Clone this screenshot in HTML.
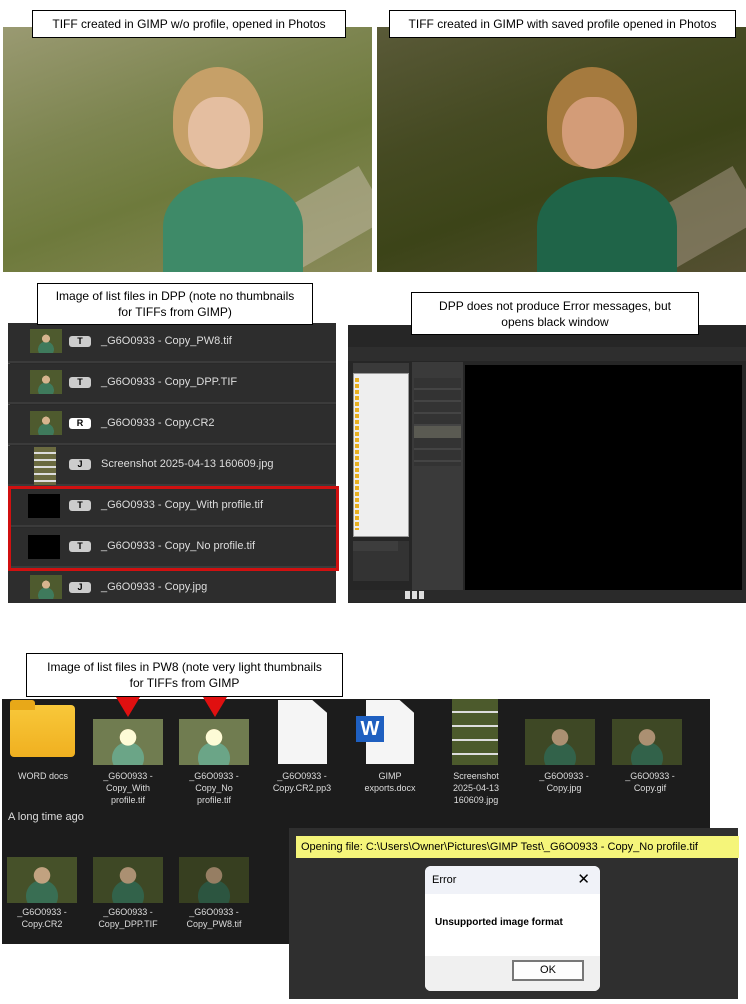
<!DOCTYPE html>
<html><head><meta charset="utf-8"><style>
*{margin:0;padding:0;box-sizing:border-box}
body{width:746px;height:1004px;background:#fff;position:relative;overflow:hidden;font-family:"Liberation Sans",sans-serif}
.a{position:absolute}
.lbl{position:absolute;background:#fff;border:1px solid #000;font-size:12px;color:#000;text-align:center;line-height:16px;display:flex;align-items:center;justify-content:center;z-index:5}
.photo{position:absolute;overflow:hidden}
.photo .hair{position:absolute;border-radius:50% 50% 40% 40%}
.photo .face{position:absolute;border-radius:45% 45% 50% 50%}
.photo .shirt{position:absolute;border-radius:45% 45% 10% 10%}
.row{position:absolute;left:8px;width:328px;height:40px;background:#2d2d2d;border-bottom:2px solid #3b3b3b;color:#ddd;font-size:11px}
.row .th{position:absolute;left:22px;top:6px;width:32px;height:24px}
.row .tg{position:absolute;left:61px;top:13px;width:22px;height:11px;background:#ccc;border-radius:3px;color:#000;font-size:9px;font-weight:bold;text-align:center;line-height:11px}
.row .nm{position:absolute;left:93px;top:12px}
.mini{background:radial-gradient(circle at 50% 40%,#d6b48e 0 18%,transparent 19%),radial-gradient(circle at 50% 85%,#3f7a5c 0 30%,transparent 31%),#4e5a2e}
.ic{position:absolute;font-size:9px;color:#ddd;text-align:center;line-height:12px;width:80px}
.th2{position:absolute;width:70px;height:46px}
</style></head><body>

<!-- top photos -->
<div class="photo" style="left:3px;top:27px;width:369px;height:245px;background:linear-gradient(160deg,#9a9a72 0%,#7d8550 35%,#6e7a3c 60%,#8a8a5a 100%)">
 <div class="a" style="left:240px;top:170px;width:140px;height:60px;background:#b9b29a;transform:rotate(-30deg);opacity:.6"></div>
 <div class="shirt" style="left:160px;top:150px;width:140px;height:110px;background:#3e8a68"></div>
 <div class="hair" style="left:170px;top:40px;width:90px;height:100px;background:#c6a068"></div>
 <div class="face" style="left:185px;top:70px;width:62px;height:72px;background:#e4bea0"></div>
</div>
<div class="photo" style="left:377px;top:27px;width:369px;height:245px;background:linear-gradient(160deg,#5a5a38 0%,#454a22 35%,#3c4418 60%,#555032 100%)">
 <div class="a" style="left:240px;top:170px;width:140px;height:60px;background:#9a8e78;transform:rotate(-30deg);opacity:.6"></div>
 <div class="shirt" style="left:160px;top:150px;width:140px;height:110px;background:#1f6448"></div>
 <div class="hair" style="left:170px;top:40px;width:90px;height:100px;background:#a57a3e"></div>
 <div class="face" style="left:185px;top:70px;width:62px;height:72px;background:#d39c78"></div>
</div>
<div class="lbl" style="left:32px;top:10px;width:314px;height:28px">TIFF created in GIMP w/o profile, opened in Photos</div>
<div class="lbl" style="left:389px;top:10px;width:347px;height:28px">TIFF created in GIMP with saved profile opened in Photos</div>

<!-- DPP list -->
<div class="a" style="left:8px;top:323px;width:328px;height:280px;background:#2a2a2a;border-left:2px solid #555"></div>
<div class="row" style="top:323px"><div class="th mini"></div><div class="tg">T</div><div class="nm">_G6O0933 - Copy_PW8.tif</div></div>
<div class="row" style="top:364px"><div class="th mini"></div><div class="tg">T</div><div class="nm">_G6O0933 - Copy_DPP.TIF</div></div>
<div class="row" style="top:405px"><div class="th mini"></div><div class="tg" style="background:#fff">R</div><div class="nm">_G6O0933 - Copy.CR2</div></div>
<div class="row" style="top:446px"><div class="th" style="left:26px;top:1px;width:22px;height:38px;background:repeating-linear-gradient(#6a6a40 0 5px,#ddd 5px 7px)"></div><div class="tg">J</div><div class="nm">Screenshot 2025-04-13 160609.jpg</div></div>
<div class="row" style="top:487px"><div class="th" style="left:20px;top:7px;background:#000"></div><div class="tg">T</div><div class="nm">_G6O0933 - Copy_With profile.tif</div></div>
<div class="row" style="top:528px"><div class="th" style="left:20px;top:7px;background:#000"></div><div class="tg">T</div><div class="nm">_G6O0933 - Copy_No profile.tif</div></div>
<div class="row" style="top:569px;height:34px;border:0"><div class="th mini"></div><div class="tg">J</div><div class="nm">_G6O0933 - Copy.jpg</div></div>
<div class="a" style="left:8px;top:486px;width:331px;height:85px;border:3px solid #d01010;z-index:4"></div>
<div class="lbl" style="left:37px;top:283px;width:276px;height:42px">Image of list files in DPP (note no thumbnails<br>for TIFFs from GIMP)</div>

<!-- DPP window -->
<div class="a" style="left:348px;top:325px;width:398px;height:278px;background:#262626"></div>
<div class="a" style="left:348px;top:347px;width:398px;height:14px;background:#2e2e2e"></div>
<div class="a" style="left:353px;top:363px;width:56px;height:10px;background:#3a3a3a"></div>
<div class="a" style="left:353px;top:373px;width:56px;height:164px;background:#eeeeee;border:1px solid #999"></div>
<div class="a" style="left:355px;top:378px;width:4px;height:152px;background:repeating-linear-gradient(#e8b020 0 4px,transparent 4px 6px)"></div>
<div class="a" style="left:353px;top:541px;width:56px;height:40px;background:#333"></div>
<div class="a" style="left:353px;top:541px;width:45px;height:10px;background:#3d3d3d"></div>
<div class="a" style="left:412px;top:362px;width:51px;height:228px;background:#3a3a3a"></div>
<div class="a" style="left:414px;top:378px;width:47px;height:88px;background:repeating-linear-gradient(#333 0 10px,#444 10px 12px)"></div>
<div class="a" style="left:414px;top:426px;width:47px;height:12px;background:#5a5a52"></div>
<div class="a" style="left:465px;top:365px;width:277px;height:225px;background:#000"></div>
<div class="a" style="left:348px;top:590px;width:398px;height:12px;background:#2a2a2a"></div>
<div class="a" style="left:405px;top:591px;width:20px;height:8px;background:repeating-linear-gradient(90deg,#ddd 0 5px,#2a2a2a 5px 7px)"></div>
<div class="lbl" style="left:411px;top:292px;width:288px;height:43px">DPP does not produce Error messages, but<br>opens black window</div>

<!-- PW8 -->
<div class="a" style="left:2px;top:699px;width:708px;height:245px;background:#1c1c1c"></div>
<div class="a" style="left:10px;top:705px;width:65px;height:52px;background:linear-gradient(#f8c83a,#f0b020);border-radius:4px"></div>
<div class="a" style="left:10px;top:700px;width:25px;height:10px;background:#e8a818;border-radius:3px 3px 0 0"></div>
<div class="th2 mini" style="left:93px;top:719px;filter:brightness(1.4) saturate(.7)"></div>
<div class="th2 mini" style="left:179px;top:719px;filter:brightness(1.4) saturate(.7)"></div>
<div class="a" style="left:116px;top:697px;width:0;height:0;border-left:12px solid transparent;border-right:12px solid transparent;border-top:20px solid #e01010"></div>
<div class="a" style="left:203px;top:697px;width:0;height:0;border-left:12px solid transparent;border-right:12px solid transparent;border-top:20px solid #e01010"></div>
<div class="a" style="left:278px;top:700px;width:49px;height:64px;background:#f5f5f5;clip-path:polygon(0 0,70% 0,100% 20%,100% 100%,0 100%)"></div>
<div class="a" style="left:366px;top:700px;width:48px;height:64px;background:#f5f5f5;clip-path:polygon(0 0,70% 0,100% 20%,100% 100%,0 100%)"></div>
<div class="a" style="left:356px;top:716px;width:28px;height:26px;background:#1e5fc0;color:#fff;font-weight:bold;font-size:20px;text-align:center;line-height:26px">W</div>
<div class="a" style="left:452px;top:699px;width:46px;height:66px;background:repeating-linear-gradient(#4c5a2c 0 12px,#ddd 12px 14px)"></div>
<div class="th2 mini" style="left:525px;top:719px;filter:brightness(.8)"></div>
<div class="th2 mini" style="left:612px;top:719px;filter:brightness(.8)"></div>
<div class="ic" style="left:3px;top:770px">WORD docs</div>
<div class="ic" style="left:88px;top:770px">_G6O0933 -<br>Copy_With<br>profile.tif</div>
<div class="ic" style="left:174px;top:770px">_G6O0933 -<br>Copy_No<br>profile.tif</div>
<div class="ic" style="left:262px;top:770px">_G6O0933 -<br>Copy.CR2.pp3</div>
<div class="ic" style="left:350px;top:770px">GIMP<br>exports.docx</div>
<div class="ic" style="left:436px;top:770px">Screenshot<br>2025-04-13<br>160609.jpg</div>
<div class="ic" style="left:524px;top:770px">_G6O0933 -<br>Copy.jpg</div>
<div class="ic" style="left:610px;top:770px">_G6O0933 -<br>Copy.gif</div>
<div class="a" style="left:8px;top:811px;font-size:11px;color:#ddd">A long time ago</div>
<div class="th2 mini" style="left:7px;top:857px;filter:brightness(.9)"></div>
<div class="th2 mini" style="left:93px;top:857px;filter:brightness(.8)"></div>
<div class="th2 mini" style="left:179px;top:857px;filter:brightness(.7)"></div>
<div class="ic" style="left:2px;top:906px">_G6O0933 -<br>Copy.CR2</div>
<div class="ic" style="left:88px;top:906px">_G6O0933 -<br>Copy_DPP.TIF</div>
<div class="ic" style="left:174px;top:906px">_G6O0933 -<br>Copy_PW8.tif</div>
<div class="lbl" style="left:26px;top:653px;width:317px;height:44px">Image of list files in PW8 (note very light thumbnails<br>for TIFFs from GIMP</div>

<!-- error dialog -->
<div class="a" style="left:289px;top:828px;width:449px;height:171px;background:#2f2f2f"></div>
<div class="a" style="left:296px;top:836px;width:443px;height:22px;background:#f5f57a;font-size:11px;line-height:22px;padding-left:5px;color:#000">Opening file: C:\Users\Owner\Pictures\GIMP Test\_G6O0933 - Copy_No profile.tif</div>
<div class="a" style="left:425px;top:866px;width:175px;height:125px;background:#fff;border-radius:6px;overflow:hidden">
 <div class="a" style="left:0;top:0;width:175px;height:28px;background:#f0f2f8;font-size:11px;line-height:28px;padding-left:7px">Error<span style="position:absolute;right:10px;font-size:15px">✕</span></div>
 <div class="a" style="left:10px;top:51px;font-size:10px;font-weight:bold">Unsupported image format</div>
 <div class="a" style="left:0;top:90px;width:175px;height:35px;background:#f0f0f0"></div>
 <div class="a" style="left:87px;top:94px;width:72px;height:21px;background:#fdfdfd;border:2px solid #777;font-size:11px;text-align:center;line-height:17px">OK</div>
</div>
</body></html>
